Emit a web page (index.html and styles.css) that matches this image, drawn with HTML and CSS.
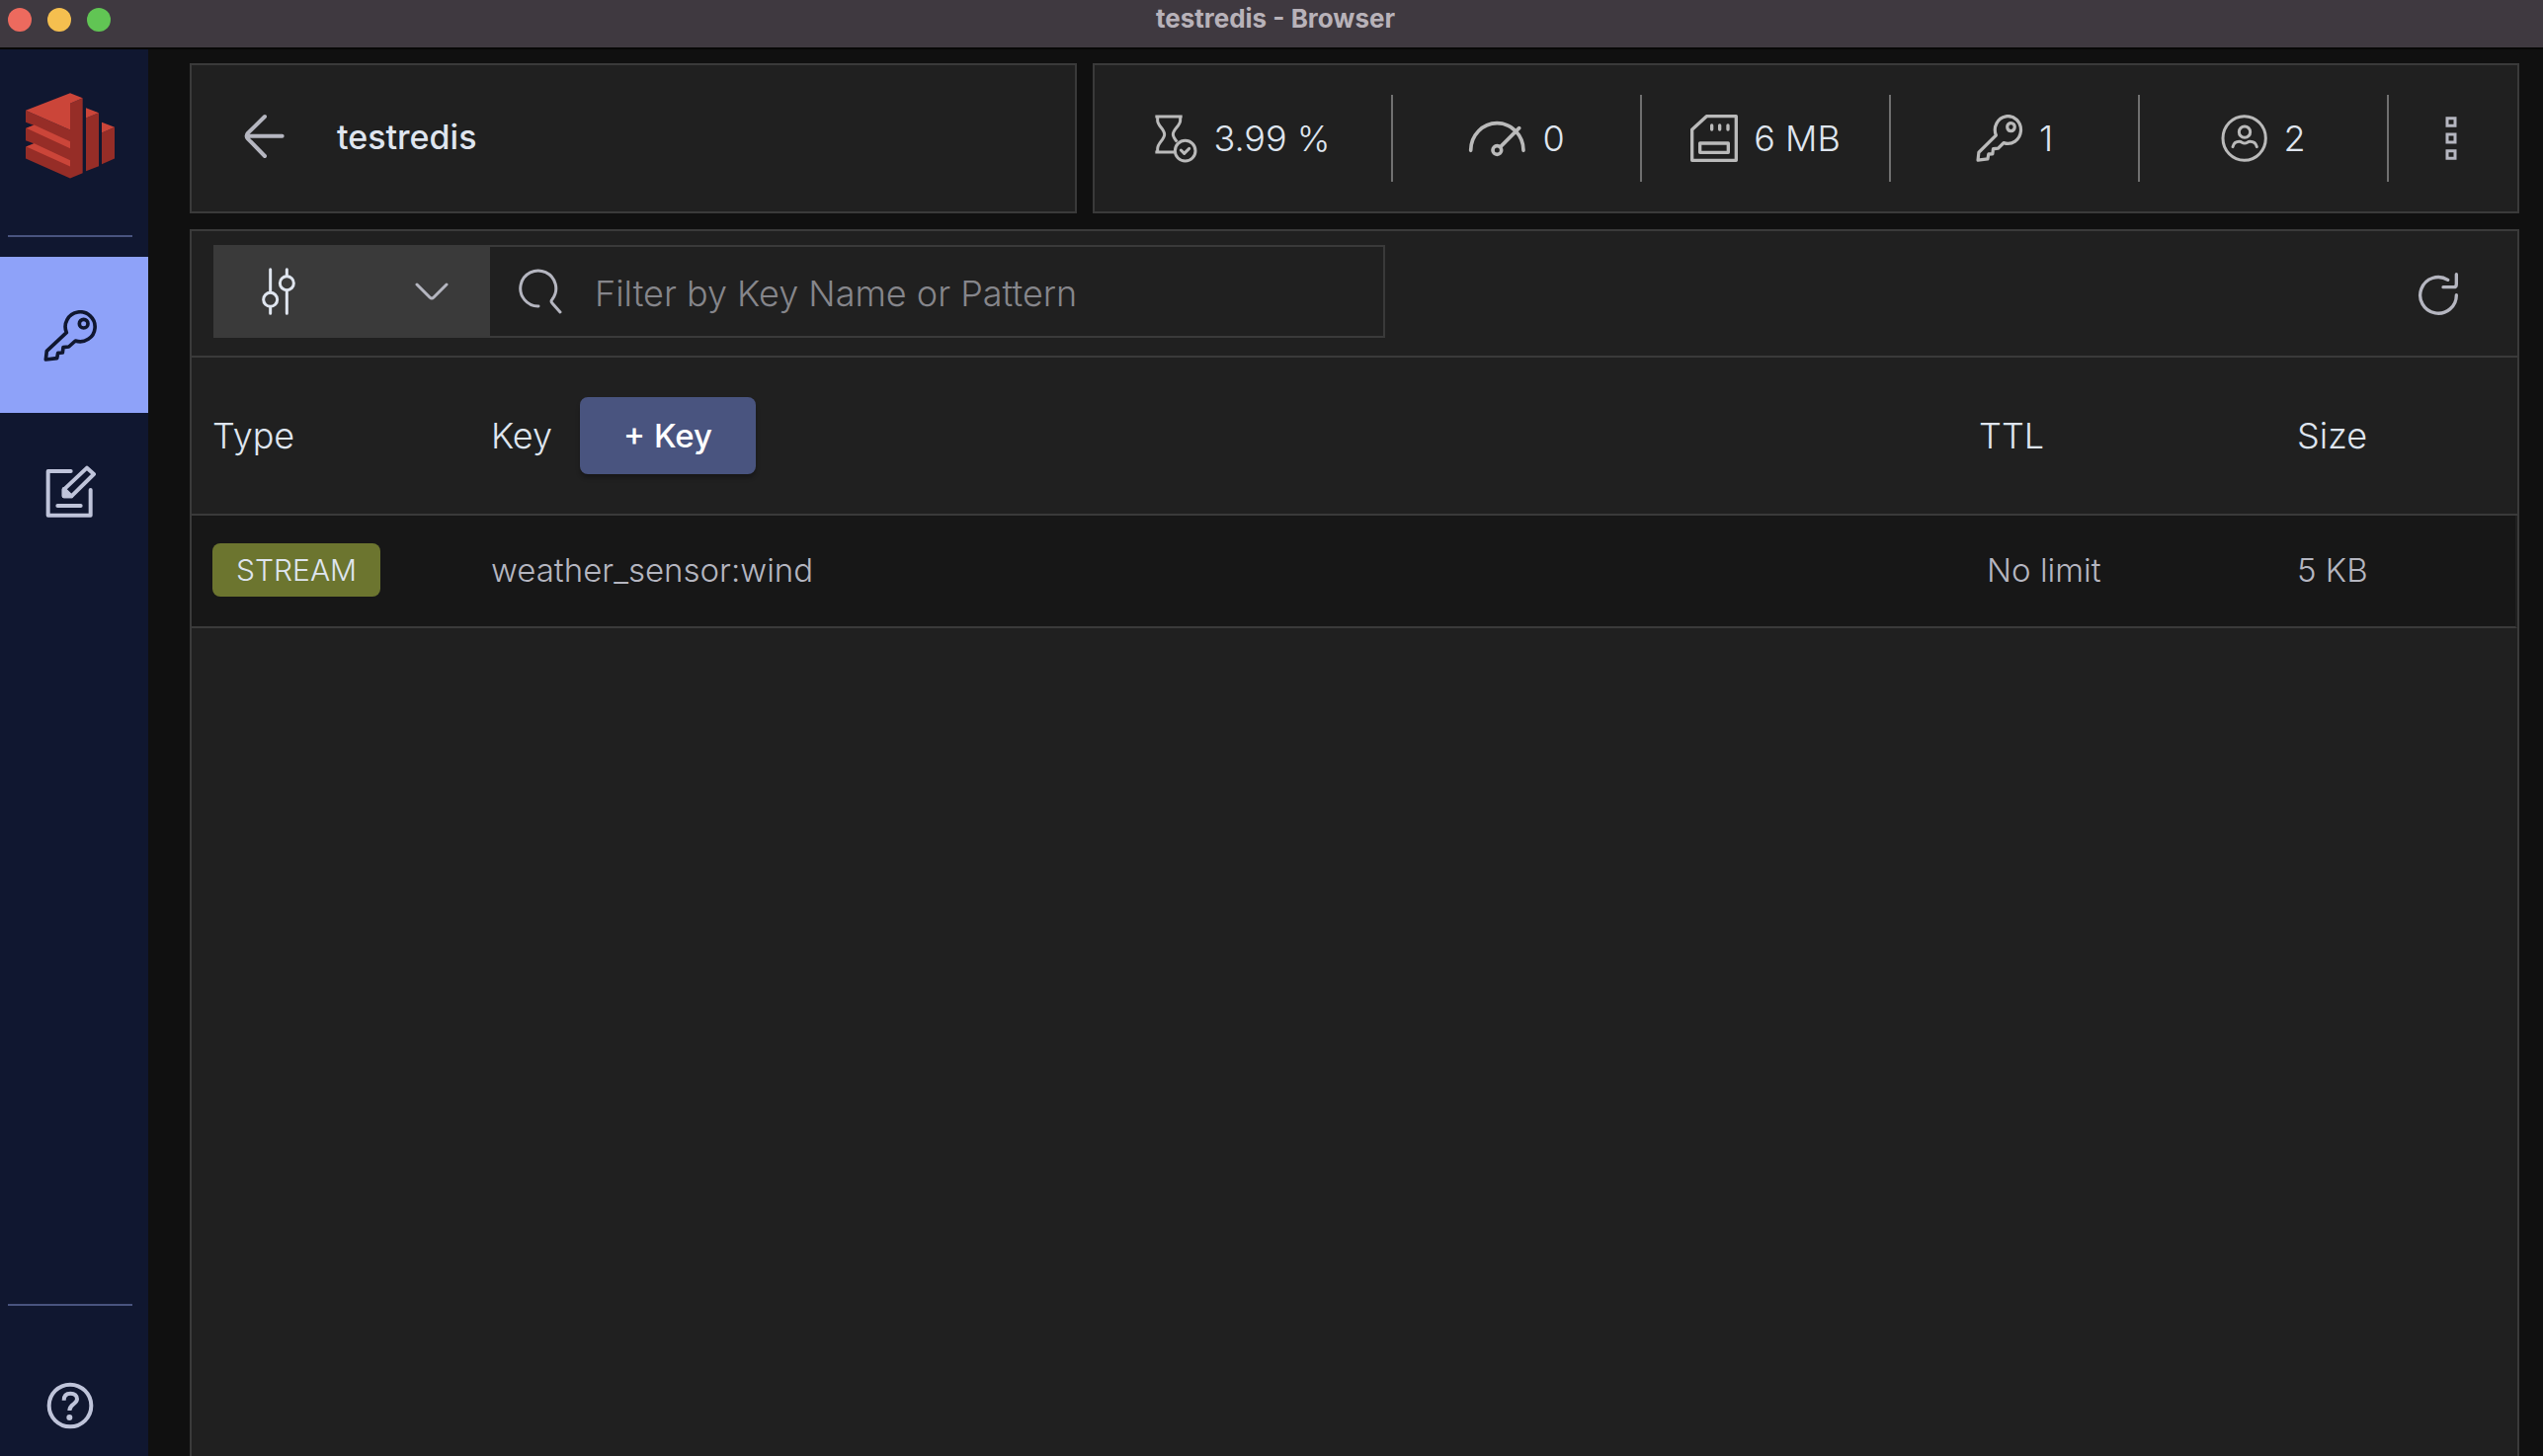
FILE: index.html
```html
<!DOCTYPE html>
<html lang="en">
<head>
<meta charset="utf-8">
<title>testredis - Browser</title>
<link rel="stylesheet" href="styles.css">
</head>
<body>
<header class="titlebar">
  <div class="lights">
    <button class="light light-close" aria-label="Close"></button>
    <button class="light light-min" aria-label="Minimize"></button>
    <button class="light light-max" aria-label="Zoom"></button>
  </div>
  <div class="window-title">testredis - Browser</div>
</header>
<div class="app">
  <nav class="sidebar" aria-label="Main">
    <a class="logo" href="#" aria-label="Home">
      <svg width="90" height="87" viewBox="78 281 270 260">
        <path class="logo-dark" d="M78 334L213 393V313L251 296V524L213 540L78 480V444L102 434L78 425V388L102 379L78 370ZM261 357L300 341V503L261 518ZM309 402L348 385V480L309 497Z"/>
        <path class="logo-light" d="M78 334L213 281L251 296L213 313V393ZM80 388L104 378L213 428V449ZM80 444L104 434L213 485V504ZM261 326L300 341L261 357ZM309 370L348 385L309 402Z"/>
      </svg>
    </a>
    <hr class="side-rule">
    <a class="side-item side-active" href="#" aria-label="Browser">
      <svg class="line" width="55" height="52" viewBox="131 191 165 156" stroke-width="11">
        <path d="M201 259A45 45 0 1 1 228 284L208 302L191 304L189 320L175 321L172 337L138 341L141 315Z"/>
        <circle cx="253" cy="232" r="13"/>
      </svg>
    </a>
    <a class="side-item" href="#" aria-label="Workbench">
      <svg class="line" width="53" height="54" viewBox="133 664 159 162" stroke-width="12">
        <path d="M213 682H144V816H273V739M173 787H243"/>
        <path d="M262 672L283 691L215 758H192V738Z"/>
        <path class="solid" d="M192 736L215 758H192Z"/>
      </svg>
    </a>
    <div class="side-bottom">
      <hr class="side-rule">
      <a class="help" href="#" aria-label="Help">
        <svg class="line" width="48" height="48" viewBox="141 327 144 144" stroke-width="12">
          <circle cx="213" cy="399" r="64"/>
          <path stroke-linecap="butt" d="M194 383C194 368 202 362 214 362C227 362 234 369 234 379C234 395 211 393 211 414"/>
          <circle class="dot" cx="211" cy="435" r="9"/>
        </svg>
      </a>
    </div>
  </nav>
  <main class="main">
    <div class="top">
      <section class="card crumb">
        <a class="back" href="#" aria-label="Back">
          <svg class="line" width="42" height="46" viewBox="741 345 126 138" stroke-width="12"><path d="M857 413H752M804 354L753 404Q745 413 753 422L804 474"/></svg>
        </a>
        <h1 class="db-name">testredis</h1>
      </section>
      <section class="card stats">
        <div class="stat stat-first">
          <svg class="line" width="43" height="49" viewBox="245 196 129 147" stroke-width="9">
            <path stroke-linecap="butt" d="M246 202H328M246 310H304M253 202V214C253 230 274 240 274 256S253 282 253 300V310M322 202V214C322 230 300 240 300 256Q300 264 312 279"/>
            <circle cx="337" cy="306" r="31"/><path d="M324 304L334 314L349 299"/>
          </svg>
          <span>3.99 %</span>
        </div>
        <div class="stat">
          <svg class="line" width="59" height="48" viewBox="1181 196 177 144" stroke-width="11">
            <path d="M1189 305A80 83 0 0 1 1349 305M1280 293L1336 237"/><circle cx="1269" cy="304" r="13"/>
          </svg>
          <span>0</span>
        </div>
        <div class="stat">
          <svg class="line" width="48" height="48" viewBox="396 198 144 144" stroke-width="10">
            <path d="M445 203H535V337H401V244ZM425 285H511V313H425ZM461 231V243M485 231V243M510 231V243"/>
          </svg>
          <span>6 MB</span>
        </div>
        <div class="stat">
          <svg class="line" width="48" height="48" viewBox="131 191 165 156" preserveAspectRatio="none" stroke-width="11">
            <path d="M201 259A45 45 0 1 1 228 284L208 302L191 304L189 320L175 321L172 337L138 341L141 315Z"/>
            <circle cx="253" cy="232" r="13"/>
          </svg>
          <span>1</span>
        </div>
        <div class="stat">
          <svg class="line" width="47" height="48" viewBox="538 198 141 144" stroke-width="9">
            <ellipse cx="609" cy="270" rx="65" ry="67"/><circle cx="610" cy="251" r="17"/>
            <path d="M574 296C577 284 586 280 594 280S602 285 610 285S618 280 626 280C635 280 644 284 647 296"/>
          </svg>
          <span>2</span>
        </div>
        <button class="more" aria-label="More">
          <svg class="line" width="14" height="46" viewBox="1212 201 42 138" stroke-width="9">
            <path stroke-linejoin="miter" d="M1221 209H1245V232H1221ZM1221 258H1245V282H1221ZM1221 308H1245V331H1221Z"/>
          </svg>
        </button>
      </section>
    </div>
    <section class="card browser">
      <div class="toolbar">
        <div class="filter">
          <div class="type-filter">
            <select class="type-select" aria-label="Key type"><option></option></select>
            <svg class="line bright sliders" width="36" height="48" viewBox="789 63 108 144" stroke-width="9">
              <path d="M818 68V137M818 184V202M868 68V87M868 133V202"/><circle cx="818" cy="160" r="21"/><circle cx="868" cy="110" r="21"/>
            </svg>
            <svg class="line chevron" width="34" height="18" viewBox="0 0 34 18" stroke-width="3"><path d="M2 2L15 15Q17 17 19 15L32 2"/></svg>
          </div>
          <div class="search">
            <svg class="line" width="46" height="46" viewBox="0 0 46 46" stroke-width="3"><path d="M21 38A18 18 0 1 1 35 31Q33 33 35 35L43 44"/></svg>
            <input class="search-input" type="text" aria-label="Filter by Key Name or Pattern" placeholder="Filter by Key Name or Pattern">
          </div>
        </div>
        <button class="refresh" aria-label="Refresh">
          <svg class="line" width="43" height="45" viewBox="1130 672 129 135" stroke-width="10"><path d="M1248 743A55 55 0 1 1 1222 697M1248 680V710Q1248 719 1240 719H1208"/></svg>
        </button>
      </div>
      <table class="keys">
        <colgroup><col class="col-type"><col><col class="col-ttl"><col class="col-size"></colgroup>
        <thead>
          <tr>
            <th scope="col">Type</th>
            <th scope="col"><div class="key-head">Key <button class="add-key">+ Key</button></div></th>
            <th scope="col">TTL</th>
            <th scope="col">Size</th>
          </tr>
        </thead>
        <tbody>
          <tr>
            <td><span class="badge">STREAM</span></td>
            <td>weather_sensor:wind</td>
            <td class="ttl">No limit</td>
            <td class="size">5 KB</td>
          </tr>
        </tbody>
      </table>
    </section>
  </main>
</div>
</body>
</html>
```
FILE: styles.css
```css
* { box-sizing: border-box; }

body {
  margin: 0;
  min-height: 100vh;
  display: flex;
  flex-direction: column;
  background: #101010;
  color: #b5b6c0;
  font-family: Inter, "Liberation Sans", sans-serif;
  font-size: 33px;
  font-weight: 300;
}

button {
  padding: 0;
  border: 0;
  background: none;
  color: inherit;
  font: inherit;
}

svg { display: block; flex: none; }

.line {
  fill: none;
  stroke: currentColor;
  stroke-linecap: round;
  stroke-linejoin: round;
}
.solid { fill: currentColor; }
.dot { fill: currentColor; stroke: none; }
.bright { color: #dfe5ef; }

/* Window title bar */
.titlebar {
  display: grid;
  grid-template-columns: 1fr auto 1fr;
  height: 50px;
  padding: 0 0 8px 8px;
  border-bottom: 2px solid #070707;
  background: #3f3940;
}
.lights { display: flex; gap: 16px; align-items: center; }
.light { width: 24px; height: 24px; border-radius: 50%; }
.light-close { background: #ed6a5e; }
.light-min { background: #f5bf4f; }
.light-max { background: #61c554; }
.window-title {
  color: #b8b2b9;
  font-size: 26px;
  font-weight: 700;
  line-height: 38px;
}

.app { display: flex; flex: 1; }

/* Sidebar */
.sidebar {
  display: flex;
  flex-direction: column;
  width: 150px;
  background: #101730;
  color: #bfc4da;
}
.logo { padding: 44px 0 0 26px; height: 188px; }
.logo-dark { fill: #962d27; }
.logo-light { fill: #cb4539; }
.side-rule {
  width: 126px;
  height: 2px;
  margin: 0 0 0 8px;
  border: 0;
  background: #49547f;
}
.side-item {
  display: grid;
  place-items: center;
  height: 158px;
  padding: 2px 8px 0 0;
  color: inherit;
}
.side-rule + .side-item { margin-top: 20px; }
.side-active { background: #8ea2f9; color: #101730; }
.side-bottom { margin-top: auto; }
.help {
  display: grid;
  place-items: center;
  height: 152px;
  padding: 50px 8px 0 0;
  color: inherit;
}

/* Content */
.main {
  display: flex;
  flex: 1;
  flex-direction: column;
  gap: 16px;
  min-width: 0;
  padding: 14px 24px 0 42px;
}
.card { border: 2px solid #3a3a3a; background: #202020; }
.top { display: grid; grid-template-columns: 449fr 722fr; gap: 16px; }

.crumb { display: flex; align-items: center; gap: 52px; height: 152px; padding: 0 52px 4px 53px; }
.back { color: #b5b6c0; }
.db-name {
  margin: 0;
  color: #dfe5ef;
  font-size: 34px;
  font-weight: 500;
}

.stats { display: flex; align-items: center; color: #bababa; }
.stat {
  display: flex;
  flex: 250;
  align-items: center;
  justify-content: center;
  gap: 16px;
  height: 88px;
  border-right: 2px solid #707070;
}
.stat-first { flex: 300; }
.stat span { color: #dfe5ef; font-size: 36px; }
.more {
  display: grid;
  flex: 126;
  place-items: center;
  padding-right: 4px;
  color: #b5b6c0;
}

.browser { flex: 1; border-bottom: 0; }
.toolbar {
  display: flex;
  align-items: center;
  justify-content: space-between;
  height: 128px;
  padding: 0 58px 4px 22px;
  border-bottom: 2px solid #3a3a3a;
}
.filter { display: flex; width: 53%; max-width: 1186px; }
.type-filter {
  display: grid;
  grid-template-columns: 1fr 1fr;
  align-items: center;
  width: 280px;
  height: 94px;
  padding: 0 42px 0 48px;
  background: #3a3a3a;
}
.type-filter svg { pointer-events: none; }
.sliders { grid-area: 1 / 1; }
.chevron { grid-area: 1 / 2; justify-self: end; }
.type-select {
  grid-area: 1 / 1 / 2 / 3;
  height: 94px;
  border: 0;
  appearance: none;
  background: none;
}
.search {
  display: flex;
  flex: 1;
  align-items: center;
  gap: 32px;
  padding-left: 28px;
  border: 2px solid #3a3a3a;
  border-left: 0;
}
.search-input {
  flex: 1;
  min-width: 0;
  padding: 4px 0 0;
  border: 0;
  background: none;
  color: #dfe5ef;
  font: inherit;
  font-size: 36px;
}
.search-input::placeholder { color: #86868b; opacity: 1; }
.refresh { padding-top: 4px; }

/* Key table */
.keys { width: 100%; border-spacing: 0; table-layout: fixed; }
.col-type { width: 282px; }
.col-ttl { width: 322px; }
.col-size { width: 244px; }
.keys th, .keys td {
  padding: 0 0 0 21px;
  border-bottom: 2px solid #3a3a3a;
  text-align: left;
}
.keys th { height: 160px; color: #dfe5ef; font-size: 36px; font-weight: 300; }
.keys td { height: 114px; padding-bottom: 2px; background: #171717; }
.keys .ttl { padding-left: 29px; }
.keys .size { border-right: 2px solid #202020; }
.key-head { display: flex; align-items: center; gap: 28px; }
.add-key {
  width: 178px;
  height: 78px;
  border-radius: 8px;
  background: #49547f;
  box-shadow: 0 4px 4px #0004;
  color: #fff;
  font-size: 33px;
  font-weight: 500;
}
.badge {
  display: inline-block;
  padding: 0 24px;
  border-radius: 8px;
  background: #6c752f;
  color: #dfe5ef;
  font-size: 30px;
  line-height: 54px;
  vertical-align: middle;
}
```
